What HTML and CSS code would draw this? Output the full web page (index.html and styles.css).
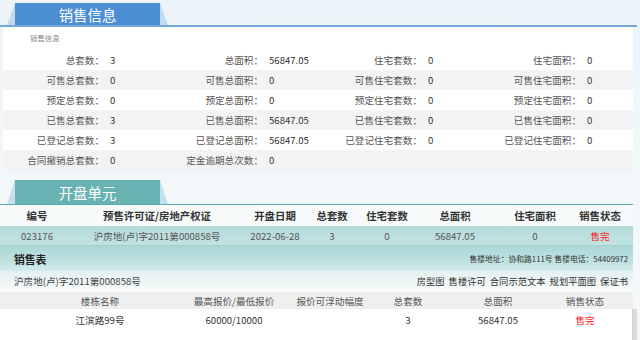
FILE: index.html
```html
<!DOCTYPE html>
<html lang="zh-CN">
<head>
<meta charset="utf-8">
<title>销售信息</title>
<link rel="stylesheet" href="styles.css">
</head>
<body>
<div class="page">
  <section class="sec-info">
    <div class="tabbar tabbar-blue">
      <div class="tab tab-blue"><div class="tab-face">销售信息</div></div>
    </div>
    <div class="panel">
      <div class="caption">销售信息</div>
      <div class="info-row">
        <span class="lbl">总套数：</span><span class="val">3</span>
        <span class="lbl">总面积：</span><span class="val">56847.05</span>
        <span class="lbl">住宅套数：</span><span class="val">0</span>
        <span class="lbl">住宅面积：</span><span class="val">0</span>
      </div>
      <div class="info-row alt">
        <span class="lbl">可售总套数：</span><span class="val">0</span>
        <span class="lbl">可售总面积：</span><span class="val">0</span>
        <span class="lbl">可售住宅套数：</span><span class="val">0</span>
        <span class="lbl">可售住宅面积：</span><span class="val">0</span>
      </div>
      <div class="info-row">
        <span class="lbl">预定总套数：</span><span class="val">0</span>
        <span class="lbl">预定总面积：</span><span class="val">0</span>
        <span class="lbl">预定住宅套数：</span><span class="val">0</span>
        <span class="lbl">预定住宅面积：</span><span class="val">0</span>
      </div>
      <div class="info-row alt">
        <span class="lbl">已售总套数：</span><span class="val">3</span>
        <span class="lbl">已售总面积：</span><span class="val">56847.05</span>
        <span class="lbl">已售住宅套数：</span><span class="val">0</span>
        <span class="lbl">已售住宅面积：</span><span class="val">0</span>
      </div>
      <div class="info-row">
        <span class="lbl">已登记总套数：</span><span class="val">3</span>
        <span class="lbl">已登记总面积：</span><span class="val">56847.05</span>
        <span class="lbl">已登记住宅套数：</span><span class="val">0</span>
        <span class="lbl">已登记住宅面积：</span><span class="val">0</span>
      </div>
      <div class="info-row alt">
        <span class="lbl">合同撤销总套数：</span><span class="val">0</span>
        <span class="lbl">定金逾期总次数：</span><span class="val">0</span>
      </div>
    </div>
  </section>

  <section class="sec-units">
    <div class="tabbar tabbar-teal">
      <div class="tab tab-teal"><div class="tab-face">开盘单元</div></div>
    </div>
    <div class="units">
      <div class="u-row u-head">
        <span>编号</span><span>预售许可证/房地产权证</span><span>开盘日期</span><span>总套数</span><span>住宅套数</span><span>总面积</span><span>住宅面积</span><span>销售状态</span>
      </div>
      <div class="u-row u-data">
        <span>023176</span><span>沪房地(卢)字2011第000858号</span><span>2022-06-28</span><span>3</span><span>0</span><span>56847.05</span><span>0</span><span class="sold">售完</span>
      </div>
    </div>
    <div class="sales">
      <div class="sales-bar">
        <span class="sales-title">销售表</span>
        <span class="sales-addr">售楼地址：协和路111号 售楼电话：54409972</span>
      </div>
      <div class="license-row">
        <span class="license">沪房地(卢)字2011第000858号</span>
        <span class="links"><span>房型图</span><span>售楼许可</span><span>合同示范文本</span><span>规划平面图</span><span>保证书</span></span>
      </div>
      <div class="s-row s-head">
        <span>楼栋名称</span><span>最高报价/最低报价</span><span>报价可浮动幅度</span><span>总套数</span><span>总面积</span><span>销售状态</span>
      </div>
      <div class="s-body">
        <div class="s-rows">
          <div class="s-row s-data">
            <span>江滨路99号</span><span>60000/10000</span><span></span><span>3</span><span>56847.05</span><span class="sold">售完</span>
          </div>
        </div>
        <div class="scroll-thumb"></div>
      </div>
    </div>
  </section>
</div>
</body>
</html>
```

FILE: styles.css
```css
* { box-sizing: border-box; margin: 0; padding: 0; }

body {
  width: 640px;
  height: 340px;
  overflow: hidden;
  font-family: "Noto Sans CJK SC", "Noto Sans", sans-serif;
  font-size: 9.6px;
  color: #444;
  background: linear-gradient(180deg, #edf4f9 0%, #f2f7fa 50%, #f4f8fa 100%);
}

.page { width: 640px; }

/* tabs */
.tabbar {
  width: 637px;
  display: flex;
}
.tabbar-blue {
  height: 27px;
  padding-top: 3px;
  border-bottom: 2px solid #72a8d7;
}
.tabbar-teal {
  width: 633px;
  height: 25px;
  border-bottom: 1.5px solid #5fadad;
}
.tab {
  width: 161px;
  height: 100%;
  margin-left: 7px;
  clip-path: polygon(8px 0, 153px 0, 161px 100%, 0 100%);
}
.tab-blue { background: #c3dbf0; }
.tab-teal { background: #c6dfee; }
.tab-face {
  height: 100%;
  margin: 0 8px;
  color: #fff;
  font-size: 14.4px;
  display: flex;
  align-items: center;
  justify-content: center;
}
.tab-blue .tab-face { background: #4b8fd2; }
.tab-teal .tab-face { background: #68b2b2; }

/* info panel */
.panel {
  width: 630px;
  margin-left: 3px;
  background: #fff;
}
.caption {
  height: 23px;
  padding-left: 27px;
  font-size: 7.4px;
  color: #888;
  line-height: 21px;
}
.info-row {
  height: 20px;
  display: grid;
  grid-template-columns: repeat(4, 101px 58px);
  align-items: center;
}
.info-row.alt { background: #f3f3f3; }
.lbl {
  text-align: right;
  color: #555;
  white-space: nowrap;
}
.val {
  padding-left: 6px;
  color: #333;
  white-space: nowrap;
}

/* units */
.sec-units { margin-top: 10px; width: 633px; }
.u-row {
  display: grid;
  grid-template-columns: 74px 166px 70px 44px 66px 70px 90px 40px;
  align-items: center;
}
.u-row > span,
.s-row > span {
  display: flex;
  justify-content: center;
  white-space: nowrap;
}
.u-head {
  height: 21px;
  background: #f6fafa;
  font-weight: bold;
  font-size: 10.4px;
  color: #333;
}
.u-data {
  height: 20px;
  background: linear-gradient(180deg, #b5dbdb 0%, #c3e2e2 100%);
  border-bottom: 1px solid #9fcfcf;
  color: #555;
}
.sold { color: #f22 !important; }

/* sales */
.sales-bar {
  height: 25px;
  padding: 0 5px 0 14px;
  display: flex;
  align-items: center;
  justify-content: space-between;
  background: linear-gradient(180deg, #acd7d7 0%, #bfe1e1 60%, #d4ebeb 100%);
}
.sales-title {
  font-weight: bold;
  font-size: 10.8px;
  color: #222;
}
.sales-addr {
  font-size: 7.8px;
  color: #333;
}
.license-row {
  height: 20px;
  padding: 0 5px 0 14px;
  display: flex;
  align-items: center;
  justify-content: space-between;
  background: linear-gradient(180deg, #e2f1f1 0%, #f8fbfb 100%);
  color: #444;
}
.links { display: flex; gap: 4px; font-size: 9.3px; color: #333; }
.s-row {
  display: grid;
  grid-template-columns: 200px 68px 124px 32px 148px 26px;
  align-items: center;
}
.s-head {
  height: 17px;
  margin-top: 1px;
  background: #efefef;
  color: #555;
}
.s-body {
  display: flex;
  height: 40px;
  background: #fff;
}
.s-rows { flex: 1; }
.s-data {
  height: 22px;
  color: #333;
}
.scroll-thumb {
  width: 5px;
  height: 40px;
  margin-right: -4px;
  background: #dcdcdc;
  border-left: 1px solid #cfcfcf;
}
```
